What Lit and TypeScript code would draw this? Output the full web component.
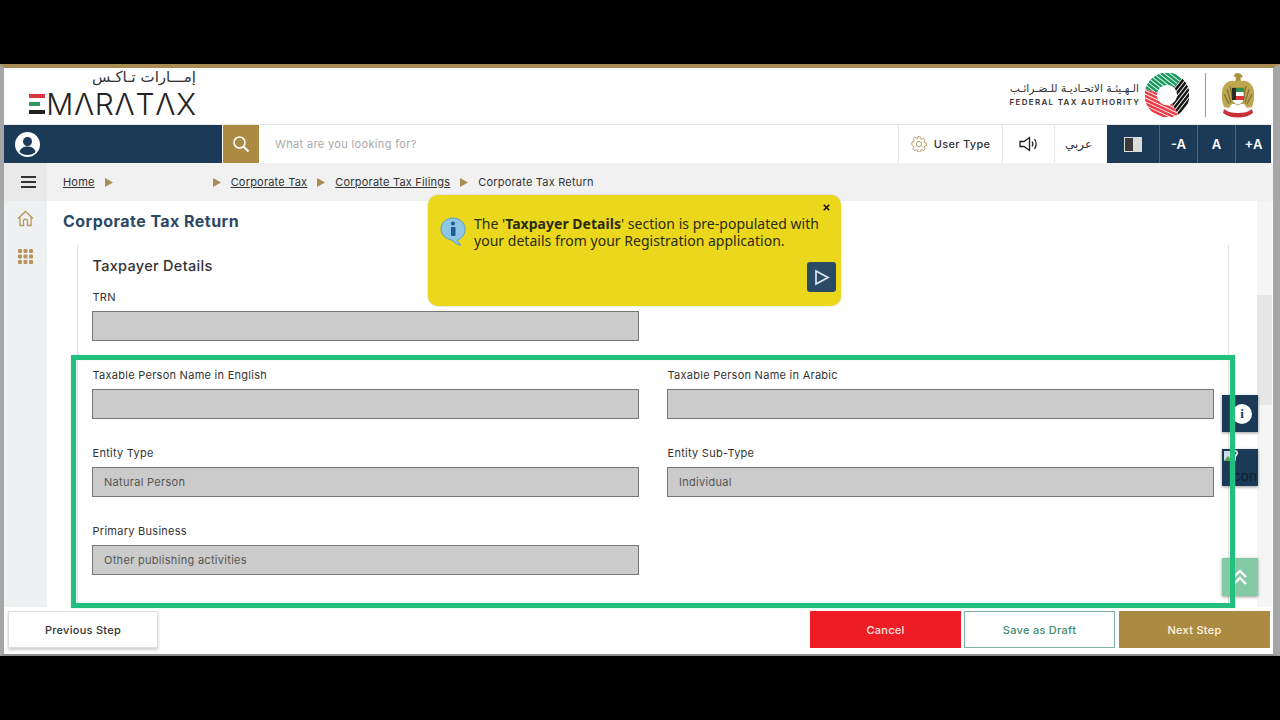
import { LitElement, html, css, svg } from 'lit';
import { customElement } from 'lit/decorators.js';

// ring sector used as clip for the authority logo bands
function sector(a0: number, a1: number, ro: number, ri: number) {
  const p = (a: number, r: number) => {
    const t = ((a - 90) * Math.PI) / 180;
    return `${(22 + r * Math.cos(t)).toFixed(2)} ${(22 + r * Math.sin(t)).toFixed(2)}`;
  };
  const large = a1 - a0 > 180 ? 1 : 0;
  return `M${p(a0, ro)}A${ro} ${ro} 0 ${large} 1 ${p(a1, ro)}L${p(a1, ri)}A${ri} ${ri} 0 ${large} 0 ${p(a0, ri)}Z`;
}

const bands = [
  { id: 'g', from: -75, to: 42, color: '#179a5c', angle: 38 },
  { id: 'k', from: 42, to: 150, color: '#151515', angle: 128 },
  { id: 'r', from: 150, to: 285, color: '#ea3f4a', angle: 205 },
];

const ftaLogo = html`<svg class="fta-mark" viewBox="0 0 44 44">
  <defs>
    ${bands.map(
      (b) => svg`<clipPath id="clip-${b.id}"><path d=${sector(b.from, b.to, 22.5, 10)}></path></clipPath>`
    )}
  </defs>
  ${bands.map(
    (b) => svg`<g clip-path="url(#clip-${b.id})">
      <g transform="rotate(${b.angle} 22 22)" stroke=${b.color} stroke-width="2.500">
        ${[-20.4, -17, -13.6, -10.2, -6.8, -3.4, 0, 3.4, 6.8, 10.2, 13.6, 17, 20.4].map(
          (o) => svg`<line x1="-10" x2="54" y1=${22 + o} y2=${22 + o}></line>`
        )}
      </g>
    </g>`
  )}
</svg>`;

const emblem = html`<svg class="emblem" viewBox="0 0 34 46">
  <path d="M15 1l4 .5 3 3-2.500 1.500 .5 5h-6l1-5.500-2.500-1.500z" fill="#a8913f"></path>
  <path d="M13 9C7 8 2 12 1 20c-.5 5 0 10 2 15l5 1 3-4h12l3 4 5-1c2-5 2.500-10 2-15-1-8-6-12-12-11z" fill="#bfa650"></path>
  <path d="M3 22l5 10M6 17l4 14M9 14l3 15M28 17l-4 14M31 22l-5 10M25 14l-3 15" stroke="#7f7034" stroke-width="1.200"></path>
  <path d="M11 16h12v11c0 3-3 5-6 6-3-1-6-3-6-6z" fill="#fff" stroke="#7f7034" stroke-width=".6"></path>
  <rect x="11" y="16" width="4" height="12" fill="#2a2a2a"></rect>
  <rect x="15" y="16" width="8" height="4" fill="#2f8f4e"></rect>
  <rect x="15" y="24" width="8" height="4" fill="#d9363e"></rect>
  <path d="M3 37c4 3 8 4 14 4s10-1 14-4l1 4c-4 3-9 4.500-15 4.500S6 44 2 41z" fill="#c9323a"></path>
</svg>`;

const crumbArrow = html`<svg class="crumb-arrow" viewBox="0 0 8 9"><path d="M0 0l8 4.500L0 9z"></path></svg>`;

@customElement('app-root')
export class AppRoot extends LitElement {
  static styles = css`
    :host {
      display: block;
      width: 1280px;
      height: 720px;
      background: #000;
      padding-top: 64px;
      box-sizing: border-box;
      font-family: Inter, 'Liberation Sans', sans-serif;
      color: #333;
      overflow: hidden;
    }
    svg { display: block; }

    .screen {
      height: 592px;
      box-sizing: border-box;
      background: #fff;
      border-top: 4px solid #a98c54;
      border-left: 4px solid #a6a6a6;
      border-right: 7px solid #a6a6a6;
      border-bottom: 2px solid #8f8f8f;
      display: flex;
      flex-direction: column;
    }

    /* header */
    .header {
      height: 57px;
      flex: none;
      display: flex;
      align-items: center;
      justify-content: space-between;
      padding: 0 18px 3px 27px;
      box-sizing: border-box;
      border-bottom: 1px solid #e8e8e8;
    }
    .logo { display: flex; flex-direction: column; align-items: flex-end; width: 165px; }
    .logo-ar {
      font-family: 'DejaVu Sans', sans-serif;
      font-size: 15px;
      line-height: 18px;
      color: #333;
      margin-top: -5px;
    }
    .logo-en { display: flex; align-items: center; height: 24px; margin-top: 6px; }
    .logo-e { display: flex; flex-direction: column; gap: 4px; width: 16px; margin-right: 1px; }
    .logo-e i { display: block; height: 4px; background: #222; }
    .logo-e i:nth-child(1) { background: #d8383f; }
    .logo-e i:nth-child(2) { background: linear-gradient(90deg, #2f9a5c 70%, #fff 70%); }
    .logo-word {
      font-weight: 300;
      font-size: 30px;
      line-height: 24px;
      color: #222;
      letter-spacing: .7px;
      margin-right: -.7px;
    }
    .authority { display: flex; align-items: center; }
    .authority-text { text-align: right; margin-right: 6px; }
    .authority-ar {
      font-family: 'DejaVu Sans', sans-serif;
      font-size: 10.700px;
      line-height: 14px;
      color: #333;
    }
    .authority-en { font-size: 8px; font-weight: 600; letter-spacing: 1.300px; line-height: 12px; color: #333; white-space: nowrap; margin-right: -1.300px; }
    .fta-mark { width: 44px; height: 44px; }
    .divider { width: 1px; height: 44px; background: #9a9a9a; margin: 0 15px 0 16px; }
    .emblem { width: 34px; height: 46px; }

    /* nav bar */
    .nav { height: 38px; flex: none; display: flex; padding-right: 2px; box-sizing: border-box; }
    .user { width: 218px; background: #1b3a57; display: flex; align-items: center; padding-left: 11px; box-sizing: border-box; }
    .user svg { width: 25px; height: 25px; }
    .search-btn { width: 36px; margin-left: 1px; background: #ab8a42; display: flex; align-items: center; justify-content: center; }
    .search-btn svg { width: 18px; height: 18px; }
    .search { flex: 1; display: flex; align-items: center; padding-left: 16px; font-size: 11px; letter-spacing: .35px; color: #a9a9a9; }
    .tool {
      display: flex;
      align-items: center;
      justify-content: center;
      border-left: 1px solid #e6e6e6;
      box-sizing: border-box;
      font-size: 11px;
      letter-spacing: .3px;
      font-weight: 500;
      color: #333;
    }
    .tool-user { width: 104px; gap: 7px; }
    .tool-user svg { width: 16px; height: 16px; }
    .tool-sound { width: 52px; }
    .tool-sound svg { width: 20px; height: 18px; }
    .tool-lang { width: 53px; padding-right: 5px; font-size: 12px; font-family: 'DejaVu Sans', sans-serif; font-weight: 400; }
    .dark { background: #1b3a57; color: #fff; font-size: 13px; font-weight: 600; border-left: 1px solid #4a6580; height: 100%; display: flex; align-items: center; justify-content: center; box-sizing: border-box; }
    .dark-contrast { width: 52px; border-left: none; }
    .dark-contrast svg { width: 18px; height: 15px; }
    .dark-a { width: 38px; }
    .dark-a.last { width: 36px; }

    /* body */
    .crumb-row { height: 38px; flex: none; background: #f1f1f1; display: flex; align-items: center; }
    .burger { width: 43px; height: 100%; padding-left: 5px; box-sizing: border-box; background: #e9e9e9; display: flex; flex-direction: column; align-items: center; justify-content: center; gap: 3px; margin-right: 16px; }
    .burger i { display: block; width: 15px; height: 2px; background: #333; }
    .crumbs { display: flex; align-items: center; gap: 10px; font-size: 11px; letter-spacing: .2px; color: #333; }
    .crumbs a { color: #333; text-decoration: underline; }
    .crumb-gap { width: 80px; }
    .crumb-arrow { width: 8px; height: 9px; fill: #a98c54; }

    .body { flex: 1; min-height: 0; display: flex; position: relative; }
    .sidebar { width: 43px; flex: none; background: #eef1f2; display: flex; flex-direction: column; align-items: center; padding-top: 9px; padding-right: 1px; gap: 21px; box-sizing: border-box; }
    .sidebar svg { width: 17px; height: 17px; }
    .main { flex: 1; min-width: 0; display: flex; flex-direction: column; padding-left: 16px; box-sizing: border-box; }
    h1 { margin: 0; font-size: 16px; line-height: 20px; font-weight: 700; color: #2b4864; padding-top: 10px; height: 44px; box-sizing: border-box; letter-spacing: .46px; }
    .panel {
      flex: 1;
      margin-left: 14px;
      width: 1152px;
      box-sizing: border-box;
      border-left: 1px solid #e2e2e2;
      border-right: 1px solid #e2e2e2;
      padding: 11px 14px 0 14px;
    }
    h2 { margin: 0 0 13px; font-size: 14.500px; line-height: 20px; font-weight: 500; color: #333; letter-spacing: .3px; padding-left: .5px; }
    .grid { display: grid; grid-template-columns: 547px 547px; column-gap: 28px; row-gap: 26px; }
    .field label { display: block; font-size: 11px; line-height: 16px; letter-spacing: .27px; color: #333; margin-bottom: 6px; padding-left: .5px; }
    .input {
      height: 30px;
      box-sizing: border-box;
      background: #cbcbcb;
      border: 1px solid #777;
      padding: 0 11px;
      display: flex;
      align-items: center;
      font-size: 11px;
      letter-spacing: .3px;
      color: #555;
    }
    .scrollbar { width: 15px; flex: none; background: #f5f5f5; margin-right: 1px; padding-top: 94px; box-sizing: border-box; }
    .scrollbar i { display: block; height: 110px; background: #e7e7e7; }

    /* things lying over the form */
    .highlight {
      position: absolute;
      left: 67px;
      top: 154px;
      width: 1164px;
      height: 253px;
      box-sizing: border-box;
      border: 5px solid #22c07f;
      box-shadow: 0 0 1px #8fe6c2, inset 0 0 1px #8fe6c2;
      pointer-events: none;
      z-index: 3;
    }
    .side-btn {
      position: absolute;
      left: 1218px;
      width: 36px;
      height: 37px;
      background: #1b3a57;
      box-shadow: 0 1px 3px rgba(0, 0, 0, .4);
      display: flex;
      align-items: center;
      justify-content: center;
      z-index: 2;
    }
    .side-info { top: 194px; padding-left: 4px; box-sizing: border-box; }
    .side-info span {
      width: 20px; height: 20px; border-radius: 50%; background: #fff; color: #1b3a57;
      font: 700 13px/20px 'Liberation Serif', serif; text-align: center;
    }
    .side-broken { top: 248px; font-size: 14px; color: #0d1f30; align-items: flex-end; padding-left: 6px; padding-bottom: 2px; box-sizing: border-box; overflow: hidden; }
    .side-broken svg { position: absolute; left: 1px; top: 1px; width: 16px; height: 16px; }
    .side-top { top: 357px; height: 38px; background: #83c9a6; z-index: 2; }
    .side-top svg { width: 16px; height: 18px; }

    .callout {
      position: absolute;
      left: 424px;
      top: -6px;
      width: 413px;
      height: 111px;
      box-sizing: border-box;
      background: #ebd81c;
      border-radius: 10px;
      box-shadow: 0 0 2px rgba(120, 110, 0, .4);
      display: flex;
      padding: 20px 16px 0 12px;
      gap: 8px;
      font-family: 'Noto Sans', 'Liberation Sans', sans-serif;
      font-size: 14px;
      line-height: 17px;
      letter-spacing: .02px;
      color: #2b2b10;
      z-index: 4;
    }
    .callout-icon { width: 26px; height: 30px; flex: none; margin-top: 1px; }
    .callout-close { position: absolute; right: 11px; top: 9px; width: 7px; height: 7px; }
    .callout-play { position: absolute; right: 5px; bottom: 14px; width: 29px; height: 30px; border-radius: 3px; background: #2b4a66; display: flex; align-items: center; justify-content: center; }
    .callout-play svg { width: 16px; height: 17px; }

    /* footer */
    .footer { height: 47px; flex: none; display: flex; align-items: flex-start; padding: 4px 3px 0 4px; box-sizing: border-box; gap: 3px; background: #fff; }
    .btn {
      width: 151px;
      height: 37px;
      box-sizing: border-box;
      display: flex;
      align-items: center;
      justify-content: center;
      font-size: 11px;
      font-weight: 500;
      letter-spacing: .28px;
    }
    .btn-prev { width: 150px; background: #fff; border: 1px solid #ddd; box-shadow: 0 2px 3px rgba(0, 0, 0, .2); color: #333; margin-right: auto; }
    .btn-cancel { background: #ee1c25; color: #fde6e6; }
    .btn-draft { background: #fff; border: 1px solid #7fb5a0; color: #3f8a6c; }
    .btn-next { background: #ab8a42; color: #fff6e2; margin-left: 1px; }
  `;

  render() {
    return html`
      <div class="screen">
        <div class="header">
          <div class="logo">
            <div class="logo-ar">إمـــارات تـاكـس</div>
            <div class="logo-en">
              <div class="logo-e"><i></i><i></i><i></i></div>
              <div class="logo-word">MΛRΛTΛX</div>
            </div>
          </div>
          <div class="authority">
            <div class="authority-text">
              <div class="authority-ar">الـهـيئـة الاتحـاديـة للـضـرائـب</div>
              <div class="authority-en">FEDERAL TAX AUTHORITY</div>
            </div>
            ${ftaLogo}
            <div class="divider"></div>
            ${emblem}
          </div>
        </div>

        <div class="nav">
          <div class="user">
            <svg viewBox="0 0 25 25">
              <circle cx="12.500" cy="12.500" r="12.500" fill="#fff"></circle>
              <circle cx="12.500" cy="9.500" r="4.500" fill="#1b3a57"></circle>
              <path d="M4.500 20c1-4 4-5.500 8-5.500s7 1.500 8 5.500c-2 2-5 3-8 3s-6-1-8-3z" fill="#1b3a57"></path>
            </svg>
          </div>
          <div class="search-btn">
            <svg viewBox="0 0 18 18" fill="none" stroke="#fff" stroke-width="1.600">
              <circle cx="7.500" cy="7.500" r="5.500"></circle>
              <path d="M11.500 11.500l5 5" stroke-width="2.200"></path>
            </svg>
          </div>
          <div class="search">What are you looking for?</div>
          <div class="tool tool-user">
            <svg viewBox="0 0 16 16" fill="none" stroke="#b39a63" stroke-width="1">
              <path d="M6.800 1h2.400l.4 2 1.500.7 1.800-1.100 1.600 1.700-1.100 1.700.7 1.500 1.900.4v2.400l-1.900.4-.7 1.500 1.100 1.700-1.600 1.700-1.800-1.100-1.500.7-.4 2H6.800l-.4-2-1.500-.7-1.800 1.100-1.600-1.700 1.100-1.700-.7-1.500L.5 9.200V6.800l1.900-.4.700-1.500L2 3.200l1.600-1.700 1.800 1.100L6.400 3z" transform="translate(.4 -.2) scale(.95)"></path>
              <circle cx="8" cy="8" r="2.600"></circle>
            </svg>
            User Type
          </div>
          <div class="tool tool-sound">
            <svg viewBox="0 0 20 18" fill="none" stroke="#222" stroke-width="1.300">
              <path d="M1 6.500h4L10.500 2.500v13L5 11.500H1z"></path>
              <path d="M13 6.500c1 1.500 1 3.500 0 5M15.500 4c2 3 2 7 0 10"></path>
            </svg>
          </div>
          <div class="tool tool-lang">عربي</div>
          <div class="dark dark-contrast">
            <svg viewBox="0 0 18 15">
              <rect width="18" height="15" fill="#dcdcdc"></rect>
              <rect x="1" y="1" width="8" height="13" fill="#3a3a3a"></rect>
            </svg>
          </div>
          <div class="dark dark-a">-A</div>
          <div class="dark dark-a">A</div>
          <div class="dark dark-a last">+A</div>
        </div>

        <div class="crumb-row">
          <div class="burger"><i></i><i></i><i></i></div>
          <div class="crumbs">
            <a>Home</a>${crumbArrow}
            <span class="crumb-gap"></span>
            ${crumbArrow}<a>Corporate Tax</a>
            ${crumbArrow}<a>Corporate Tax Filings</a>
            ${crumbArrow}<span>Corporate Tax Return</span>
          </div>
        </div>

        <div class="body">
          <div class="sidebar">
            <svg viewBox="0 0 17 17" fill="none" stroke="#b9955a" stroke-width="1.300">
              <path d="M1 8.500L8.500 1.500 16 8.500M3 7.500V15.500H6.500V11c0-2.600 4-2.600 4 0v4.500H14V7.500"></path>
            </svg>
            <svg viewBox="0 0 17 17" fill="#b9955a">
              ${[1, 6.5, 12].map((y) =>
                [1, 6.5, 12].map((x) => svg`<rect x=${x} y=${y} width="4" height="4" rx="1"></rect>`)
              )}
            </svg>
          </div>
          <div class="main">
            <h1>Corporate Tax Return</h1>
            <div class="panel">
              <h2>Taxpayer Details</h2>
              <div class="grid">
                <div class="field"><label>TRN</label><div class="input"></div></div>
                <div></div>
                <div class="field"><label>Taxable Person Name in English</label><div class="input"></div></div>
                <div class="field"><label>Taxable Person Name in Arabic</label><div class="input"></div></div>
                <div class="field"><label>Entity Type</label><div class="input">Natural Person</div></div>
                <div class="field"><label>Entity Sub-Type</label><div class="input">Individual</div></div>
                <div class="field"><label>Primary Business</label><div class="input">Other publishing activities</div></div>
              </div>
            </div>
          </div>
          <div class="scrollbar"><i></i></div>

          <div class="side-btn side-info"><span>i</span></div>
          <div class="side-btn side-broken">
            <svg viewBox="0 0 16 16">
              <path d="M1 1h8l4 4v6H1z" fill="#cfdbe6"></path>
              <path d="M1 11l4-5 3 3 3-2 2 4z" fill="#57a84a"></path>
              <path d="M10 1c3-1 5 1 4 3l-2 3" fill="none" stroke="#e8eef4" stroke-width="1.500"></path>
            </svg>
            Icon
          </div>
          <div class="side-btn side-top">
            <svg viewBox="0 0 16 18" fill="none" stroke="#fff" stroke-width="2.400">
              <path d="M2 9l6-6 6 6M2 16l6-6 6 6"></path>
            </svg>
          </div>
          <div class="highlight"></div>

          <div class="callout">
            <svg class="callout-icon" viewBox="0 0 26 30">
              <path d="M13 2c6.500 0 12 4.500 12 11s-4 10-8 11c1 2 3 4 4 5-3 0-7-2-9-5C6 23 1 19 1 13 1 6.500 6.500 2 13 2z" fill="#8ec6e6" stroke="#5b9dc4"></path>
              <circle cx="13" cy="7.500" r="2" fill="#1d5c94"></circle>
              <rect x="11" y="11" width="4.500" height="9" rx="1" fill="#1d5c94"></rect>
            </svg>
            <div>The '<b>Taxpayer Details</b>' section is pre-populated with<br />your details from your Registration application.</div>
            <svg class="callout-close" viewBox="0 0 9 9" stroke="#111" stroke-width="2">
              <path d="M1 1l7 7M8 1L1 8"></path>
            </svg>
            <div class="callout-play">
              <svg viewBox="0 0 16 17" fill="none" stroke="#dbe6f0" stroke-width="1.700">
                <path d="M2 2l12 6.500L2 15z"></path>
              </svg>
            </div>
          </div>
        </div>

        <div class="footer">
          <div class="btn btn-prev">Previous Step</div>
          <div class="btn btn-cancel">Cancel</div>
          <div class="btn btn-draft">Save as Draft</div>
          <div class="btn btn-next">Next Step</div>
        </div>
      </div>
    `;
  }
}
